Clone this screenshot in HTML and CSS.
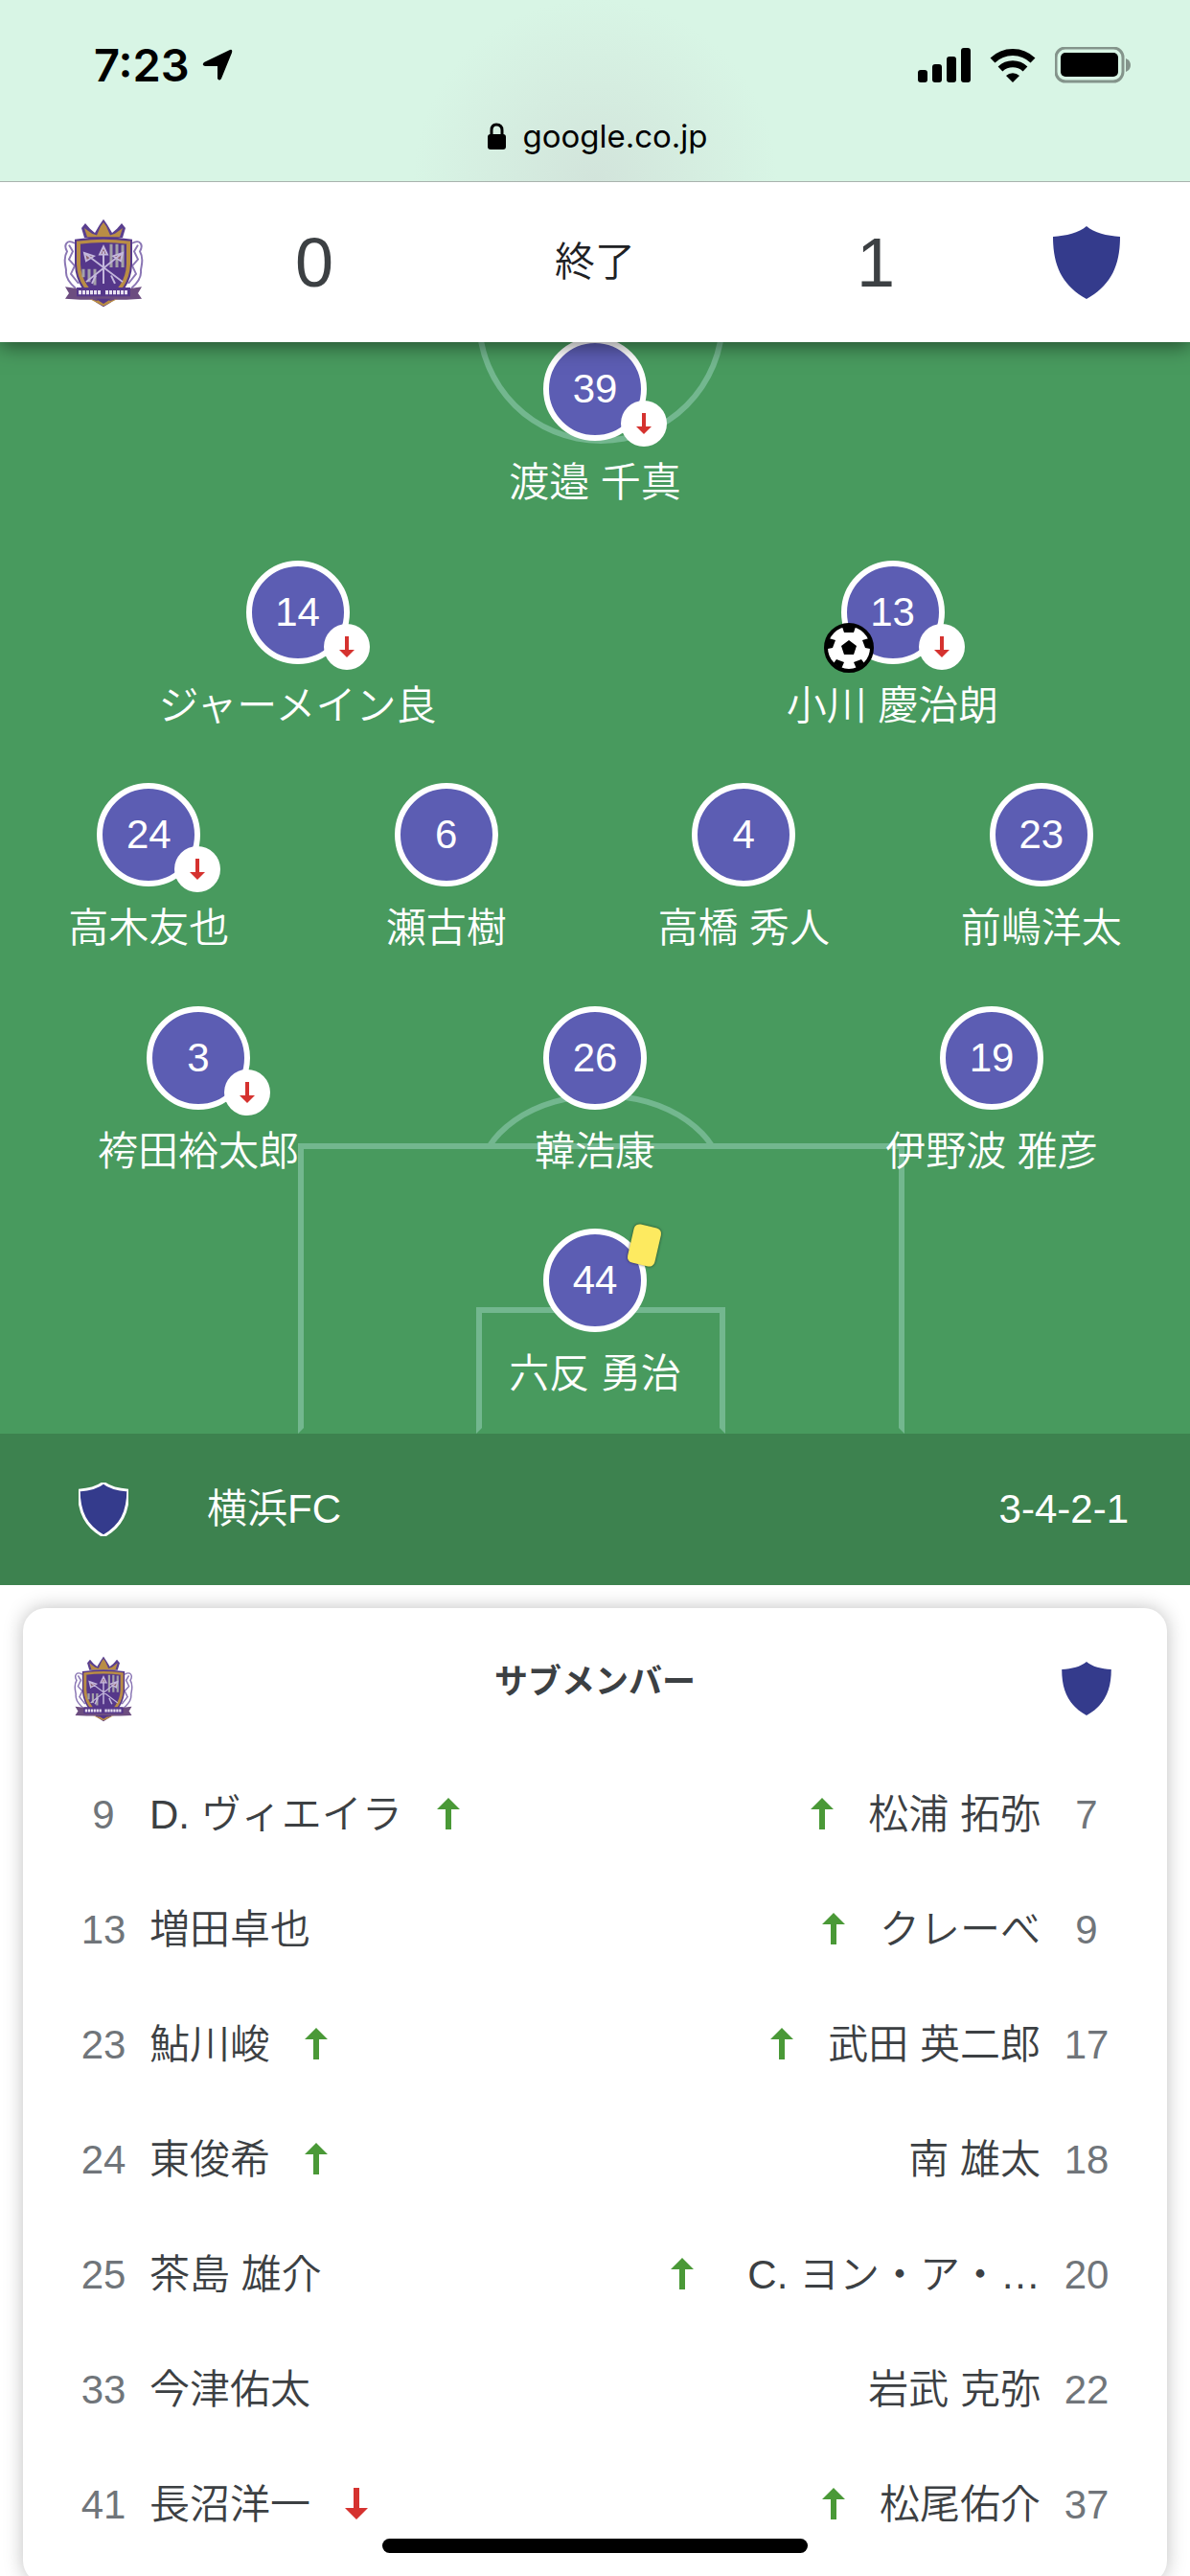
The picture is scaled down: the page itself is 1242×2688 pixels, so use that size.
FILE: index.html
```html
<!DOCTYPE html>
<html lang="ja">

<head>
    <meta charset="UTF-8">
    <meta name="viewport" content="width=device-width, initial-scale=1.0">
    <title>サンフレッチェ広島 対 横浜FC</title>
    <link rel="stylesheet" href="styles.css">
</head>

<body>
    <!-- Shared shapes -->
    <svg class="defs" aria-hidden="true">
        <symbol id="shield" viewBox="0 0 70 76">
            <path d="M35 0C43 7 56 10 70 11C70 42 60 62 35 76C10 62 0 42 0 11C14 10 27 7 35 0Z" />
        </symbol>
        <symbol id="crest" viewBox="0 0 84 94">
            <g transform="scale(1 .84)">
                <path d="M22 25L19 13L23 7L28 14L33 19L38 9L42 2L46 9L51 19L56 14L61 7L65 13L62 25Z" fill="#5a3f8f" />
                <path d="M25 24L22 13L30 20L35 22L39 11L42 6L45 11L49 22L54 20L62 13L59 24Z" fill="#b98d45" />
                <path d="M12 32C4 26 0 34 4 42C-1 52 3 60 3 66C2 76 9 84 13 88M6 34L10 42L6 52L12 60L8 70L16 82" fill="none" stroke="#8a76b4" stroke-width="2" />
                <path d="M72 32C80 26 84 34 80 42C85 52 81 60 81 66C82 76 75 84 71 88M78 34L74 42L78 52L72 60L76 70L68 82" fill="none" stroke="#8a76b4" stroke-width="2" />
                <path d="M12 27Q42 22 72 27V58Q71 92 42 111Q13 92 12 58Z" fill="#55378a" />
                <path d="M16 31Q42 27 68 31V58Q67 88 42 105Q17 88 16 58Z" fill="#55378a" stroke="#b98d45" stroke-width="4" />
                <path d="M50 33V62M56 33V62M62 34V62M21 64V74M27 64V80M33 64V84" stroke="#a3a1a8" stroke-width="3" />
                <path d="M42 36L38 46H46ZM42 42V82M22 44L62 80M62 44L24 80M22 44L24 54L32 48ZM62 44L60 54L52 48ZM30 82L34 72M54 82L50 72" fill="#8c6270" stroke="#c4b8dc" stroke-width="2" />
                <path d="M2 86L14 88H70L82 86L78 94L82 101L66 102H18L2 101L6 94Z" fill="#6c4d80" />
                <path d="M14 87H70V98H14Z" fill="#55378a" />
                <path d="M16 93H39M44 93H68" stroke="#e7e0f0" stroke-width="5" stroke-dasharray="3 1" />
                <path d="M27 101Q42 107 57 101L42 110Z" fill="#b98d45" />
                <path d="M34 101L42 107L50 101Z" fill="#55378a" />
            </g>
        </symbol>
        <symbol id="arrow" viewBox="0 0 24 33">
            <path d="M9 0H15V21H24L12 33L0 21H9Z" />
        </symbol>
        <symbol id="ball" viewBox="0 0 52 52">
            <circle cx="26" cy="26" r="24" fill="#fff" stroke="#000" stroke-width="4" />
            <path d="M26 18L34 24L31 33H21L18 24ZM19 4H33L31 10H21ZM4 20L5 16L12 18L9 26L4 27ZM48 20L47 16L40 18L43 26L48 27ZM10 42L13 38L21 41L18 48ZM42 42L39 38L31 41L34 48Z" />
        </symbol>
    </svg>

    <header class="browser">
        <div class="status">
            <div class="clock">
                <span>7:23</span>
                <svg width="32" height="34" viewBox="0 0 32 34">
                    <path d="M29 1Q32 0 31 4L20 31Q18 34 16 31V18H3Q-1 17 2 14Z" />
                </svg>
            </div>
            <div class="signals">
                <svg width="55" height="36" viewBox="0 0 55 36">
                    <rect x="0" y="23" width="10" height="13" rx="3" />
                    <rect x="15" y="17" width="10" height="19" rx="3" />
                    <rect x="30" y="9" width="10" height="27" rx="3" />
                    <rect x="45" y="0" width="10" height="36" rx="3" />
                </svg>
                <svg width="48" height="36" viewBox="0 0 48 36">
                    <path d="M3 13A30 30 0 0 1 45 13M11 22A19 19 0 0 1 37 22" fill="none" stroke="#000" stroke-width="7" />
                    <path d="M24 36L17 29A10 10 0 0 1 31 29Z" />
                </svg>
                <svg width="79" height="38" viewBox="0 0 79 38">
                    <rect x="1" y="1" width="70" height="35" rx="10" fill="none" stroke="#84948b" stroke-width="3" />
                    <rect x="6" y="6" width="60" height="25" rx="5" />
                    <path d="M74 12Q79 14 79 19Q79 24 74 26Z" fill="#84948b" />
                </svg>
            </div>
        </div>
        <div class="address">
            <svg width="19" height="28" viewBox="0 0 19 28">
                <rect x="0" y="12" width="19" height="16" rx="3" />
                <path d="M4 13V8Q4 2 9 2Q15 2 15 8V13" fill="none" stroke="#000" stroke-width="3" />
            </svg>
            <span>google.co.jp</span>
        </div>
    </header>

    <section class="score">
        <svg class="crest"><use href="#crest" /></svg>
        <span class="goals">0</span>
        <span class="state">終了</span>
        <span class="goals">1</span>
        <svg class="shield"><use href="#shield" /></svg>
    </section>

    <main>
        <section class="pitch">
            <div class="line centre-circle"></div>
            <div class="arc">
                <div class="line arc-curve"></div>
            </div>
            <div class="line box penalty-area"></div>
            <div class="line box goal-area"></div>

            <div class="row">
                <div class="player">
                    <div class="shirt">39
                        <span class="off"><svg><use href="#arrow" /></svg></span>
                    </div>
                    <span class="name">渡邉 千真</span>
                </div>
            </div>
            <div class="row">
                <div class="player">
                    <div class="shirt">14
                        <span class="off"><svg><use href="#arrow" /></svg></span>
                    </div>
                    <span class="name">ジャーメイン良</span>
                </div>
                <div class="player">
                    <div class="shirt">13
                        <svg class="goal"><use href="#ball" /></svg>
                        <span class="off"><svg><use href="#arrow" /></svg></span>
                    </div>
                    <span class="name">小川 慶治朗</span>
                </div>
            </div>
            <div class="row">
                <div class="player">
                    <div class="shirt">24
                        <span class="off"><svg><use href="#arrow" /></svg></span>
                    </div>
                    <span class="name">高木友也</span>
                </div>
                <div class="player">
                    <div class="shirt">6</div>
                    <span class="name">瀬古樹</span>
                </div>
                <div class="player">
                    <div class="shirt">4</div>
                    <span class="name">高橋 秀人</span>
                </div>
                <div class="player">
                    <div class="shirt">23</div>
                    <span class="name">前嶋洋太</span>
                </div>
            </div>
            <div class="row">
                <div class="player">
                    <div class="shirt">3
                        <span class="off"><svg><use href="#arrow" /></svg></span>
                    </div>
                    <span class="name">袴田裕太郎</span>
                </div>
                <div class="player">
                    <div class="shirt">26</div>
                    <span class="name">韓浩康</span>
                </div>
                <div class="player">
                    <div class="shirt">19</div>
                    <span class="name">伊野波 雅彦</span>
                </div>
            </div>
            <div class="row">
                <div class="player">
                    <div class="shirt">44
                        <span class="card"></span>
                    </div>
                    <span class="name">六反 勇治</span>
                </div>
            </div>
        </section>

        <div class="team">
            <svg class="shield small outlined"><use href="#shield" /></svg>
            <span class="team-name">横浜FC</span>
            <span>3-4-2-1</span>
        </div>

        <section class="subs">
            <div class="subs-head">
                <svg class="crest small"><use href="#crest" /></svg>
                <h2>サブメンバー</h2>
                <svg class="shield small"><use href="#shield" /></svg>
            </div>
            <div class="lists">
                <ul>
                    <li><span class="num">9</span><span>D. ヴィエイラ</span><svg class="up"><use href="#arrow" /></svg></li>
                    <li><span class="num">13</span><span>増田卓也</span></li>
                    <li><span class="num">23</span><span>鮎川峻</span><svg class="up"><use href="#arrow" /></svg></li>
                    <li><span class="num">24</span><span>東俊希</span><svg class="up"><use href="#arrow" /></svg></li>
                    <li><span class="num">25</span><span>茶島 雄介</span></li>
                    <li><span class="num">33</span><span>今津佑太</span></li>
                    <li><span class="num">41</span><span>長沼洋一</span><svg class="down"><use href="#arrow" /></svg></li>
                </ul>
                <ul class="away">
                    <li><span class="num">7</span><span>松浦 拓弥</span><svg class="up"><use href="#arrow" /></svg></li>
                    <li><span class="num">9</span><span>クレーべ</span><svg class="up"><use href="#arrow" /></svg></li>
                    <li><span class="num">17</span><span>武田 英二郎</span><svg class="up"><use href="#arrow" /></svg></li>
                    <li><span class="num">18</span><span>南 雄太</span></li>
                    <li><span class="num">20</span><span class="long">C. ヨン・ア・…</span><svg class="up"><use href="#arrow" /></svg></li>
                    <li><span class="num">22</span><span>岩武 克弥</span></li>
                    <li><span class="num">37</span><span>松尾佑介</span><svg class="up"><use href="#arrow" /></svg></li>
                </ul>
            </div>
        </section>
    </main>

    <div class="home-bar"></div>
</body>

</html>
```
FILE: styles.css
```css
* {
    box-sizing: border-box;
}

body {
    margin: 0;
    height: 100vh;
    overflow: hidden;
    background: #ffffff;
    color: #3c4043;
    font-family: "Liberation Sans", "Noto Sans CJK JP", sans-serif;
    font-size: 42px;
    font-weight: 350;
    line-height: 60px;
}

svg {
    display: block;
    flex: none;
}

.defs {
    position: absolute;
    width: 0;
    height: 0;
}

/* Phone status bar and address */
.browser {
    position: relative;
    z-index: 3;
    height: 190px;
    padding-top: 38px;
    border-bottom: 1px solid #a9b3ae;
    background: radial-gradient(circle at 50% 100%, #d2e4db 0, #d5ede0 100px, #d8f5e5 190px);
    color: #000000;
    font-family: Inter, sans-serif;
}

.status {
    display: flex;
    justify-content: space-between;
    padding: 0 62px 0 98px;
}

.clock,
.signals {
    display: flex;
    align-items: center;
}

.clock {
    gap: 13px;
    font-size: 47px;
    font-weight: 600;
}

.signals {
    gap: 20px;
}

.address {
    display: flex;
    justify-content: center;
    align-items: center;
    gap: 17px;
    margin-top: 14px;
    padding-left: 6px;
    font-size: 33px;
    font-weight: 400;
}

/* Score bar */
.score {
    position: relative;
    z-index: 2;
    display: grid;
    grid-template-columns: 216px 224px 1fr 224px 216px;
    align-items: center;
    justify-items: center;
    height: 167px;
    background: #ffffff;
    box-shadow: 0 4px 20px rgba(0, 0, 0, 0.5);
}

.goals {
    font-size: 72px;
}

.state {
    color: #202124;
}

.crest {
    width: 84px;
    height: 94px;
}

.shield {
    width: 70px;
    height: 76px;
    fill: #343b8c;
}

/* Pitch, the top edge sits under the score bar */
.pitch {
    position: relative;
    display: grid;
    grid-auto-rows: 1fr;
    height: 1163px;
    margin-top: -24px;
    overflow: hidden;
    background: #489a5e;
    color: #ffffff;
}

.line {
    position: absolute;
    box-sizing: content-box;
    border: 6px solid #73b78f;
}

.centre-circle {
    top: -130px;
    left: 40%;
    width: 20%;
    height: 248px;
    border-radius: 50%;
}

.arc {
    position: absolute;
    bottom: 303px;
    left: 0;
    width: 100%;
    height: 53px;
    overflow: hidden;
}

.arc-curve {
    left: 40%;
    width: 20%;
    height: 172px;
    border-radius: 50%;
}

.box {
    bottom: 0;
    border-bottom-color: transparent;
}

.penalty-area {
    left: 25%;
    width: 50%;
    height: 291px;
}

.goal-area {
    left: 40%;
    width: 20%;
    height: 120px;
}

.row {
    position: relative;
    display: flex;
    padding-top: 19px;
}

.player {
    flex: 1;
    display: flex;
    flex-direction: column;
    align-items: center;
    gap: 14px;
}

.shirt {
    position: relative;
    width: 108px;
    height: 108px;
    border: 6px solid #ffffff;
    border-radius: 50%;
    background: #5c5db3;
    line-height: 96px;
    text-align: center;
}

.off {
    position: absolute;
    right: -27px;
    bottom: -12px;
    display: flex;
    align-items: center;
    justify-content: center;
    width: 48px;
    height: 48px;
    border-radius: 50%;
    background: #ffffff;
}

.off svg {
    width: 16px;
    height: 22px;
    fill: #d5322f;
}

.goal {
    position: absolute;
    left: -24px;
    bottom: -15px;
    width: 52px;
    height: 52px;
}

.card {
    position: absolute;
    top: -9px;
    right: -18px;
    width: 29px;
    height: 41px;
    border-radius: 6px;
    background: #fdea60;
    box-shadow: 0 0 3px rgba(0, 0, 0, 0.6);
    transform: rotate(13deg);
}

.team {
    display: flex;
    align-items: center;
    height: 158px;
    padding: 0 64px 0 82px;
    background: #3d824f;
    color: #ffffff;
}

.team-name {
    flex: 1;
    margin-left: 82px;
}

/* Substitutes */
.subs {
    margin: 24px;
    padding: 36px 36px 24px;
    border-radius: 24px;
    background: #ffffff;
    box-shadow: 0 0 20px rgba(0, 0, 0, 0.25);
}

.subs-head {
    display: grid;
    grid-template-columns: 96px 1fr 96px;
    align-items: center;
    justify-items: center;
    height: 96px;
    margin-bottom: 22px;
}

.subs-head h2 {
    margin: 0 0 14px;
    font-size: 35px;
    font-weight: 700;
}

.crest.small {
    width: 62px;
    height: 70px;
}

.shield.small {
    width: 52px;
    height: 56px;
}

.shield.outlined {
    overflow: visible;
    stroke: #ffffff;
    stroke-width: 4px;
}

.outlined use {
    overflow: visible;
}

.lists {
    display: flex;
    justify-content: space-between;
}

.lists ul {
    margin: 0;
    padding: 0;
    list-style: none;
}

.lists li {
    display: flex;
    align-items: center;
    height: 120px;
}

.lists .away li {
    flex-direction: row-reverse;
}

.lists span {
    padding-top: 4px;
}

.num {
    width: 96px;
    color: #70757a;
    text-align: center;
}

.long {
    width: 326px;
    text-align: right;
}

.up,
.down {
    width: 24px;
    height: 33px;
    margin: 0 36px;
}

.down {
    fill: #d5322f;
}

.up {
    fill: #4a9937;
    transform: rotate(180deg);
}

.home-bar {
    position: fixed;
    bottom: 24px;
    left: 50%;
    width: 444px;
    height: 15px;
    border-radius: 8px;
    background: #000000;
    transform: translateX(-50%);
}
```
